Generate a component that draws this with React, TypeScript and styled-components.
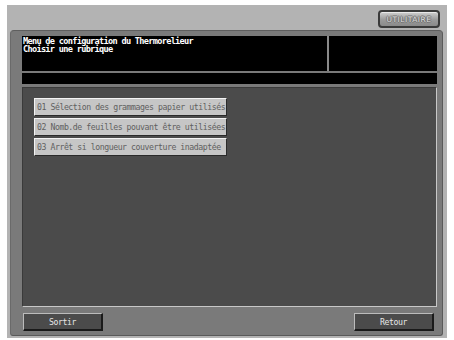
import React from "react";
import styled, { createGlobalStyle } from "styled-components";

const Global = createGlobalStyle`
  html, body { margin: 0; padding: 0; background: #ffffff; }
  body { font-family: "DejaVu Sans Mono", monospace; }
`;

const Screen = styled.div`
  margin: 5px 0 0 7px;
  width: 440px;
  height: 333px;
  background: #b3b3b3;
  display: flex;
  flex-direction: column;
`;

const TopBar = styled.div`
  height: 25px;
  display: flex;
  justify-content: flex-end;
  align-items: flex-start;
  padding: 5px 7px 0 0;
  box-sizing: border-box;
`;

const UtilButton = styled.div`
  width: 62px;
  height: 18px;
  box-sizing: border-box;
  border: 2px solid #3a3a3a;
  border-radius: 4px;
  background: linear-gradient(#d0d0d0, #9a9a9a 55%, #8a8a8a);
  box-shadow: inset 0 1px 0 #e8e8e8;
  display: flex;
  align-items: center;
  justify-content: center;
  font-family: "DejaVu Sans", sans-serif;
  font-size: 7.5px;
  letter-spacing: 0.5px;
  color: #dcdcdc;
  text-shadow: -1px 0 #707070, 1px 0 #707070, 0 -1px #707070, 0 1px #707070;
`;

const Panel = styled.div`
  margin: 0 4px 2px 3px;
  flex: 1;
  background: #7a7a7a;
  border-radius: 4px 4px 3px 3px;
  border-top: 1px solid #5e5e5e;
  border-left: 1px solid #6a6a6a;
  border-right: 1px solid #5a5a5a;
  border-bottom: 1px solid #5a5a5a;
  box-sizing: border-box;
  padding: 5px 5px 4px 11px;
  display: flex;
  flex-direction: column;
`;

const Header = styled.div`
  display: grid;
  grid-template-columns: 305px 1fr;
  gap: 2px;
  height: 35px;
  background: #8a8a8a;
`;

const Black = styled.div`
  background: #000;
  color: #fff;
  font-family: "DejaVu Sans Mono", monospace;
  font-weight: bold;
  font-size: 8.6px;
  letter-spacing: -0.7px;
  line-height: 8px;
  padding: 1px 0 0 1px;
  white-space: pre;
`;

const MessageBar = styled.div`
  margin-top: 2px;
  height: 11px;
  background: #000;
`;

const Content = styled.div`
  margin-top: 3px;
  height: 220px;
  box-sizing: border-box;
  background: #4b4b4b;
  border-top: 1px solid #3a3a3a;
  border-left: 1px solid #3a3a3a;
  border-right: 1px solid #c8c8c8;
  border-bottom: 1px solid #c8c8c8;
  padding: 10px 0 0 11px;
  display: flex;
  flex-direction: column;
  gap: 2px;
`;

const Item = styled.div`
  width: 193px;
  height: 18px;
  box-sizing: border-box;
  background: #c6c6c6;
  border-top: 1px solid #f4f4f4;
  border-left: 1px solid #f4f4f4;
  border-right: 1px solid #2a2a2a;
  border-bottom: 1px solid #2a2a2a;
  font-family: "DejaVu Sans Mono", monospace;
  font-size: 8.2px;
  letter-spacing: -0.45px;
  color: #606060;
  display: flex;
  align-items: center;
  padding-left: 2px;
  white-space: pre;
  overflow: hidden;
`;

const Footer = styled.div`
  margin-top: 6px;
  display: flex;
  justify-content: space-between;
  padding: 0 3px 0 1px;
`;

const FootButton = styled.div`
  width: 80px;
  height: 18px;
  box-sizing: border-box;
  background: #4b4b4b;
  border-top: 1px solid #bcbcbc;
  border-left: 1px solid #bcbcbc;
  border-right: 2px solid #1a1a1a;
  border-bottom: 2px solid #1a1a1a;
  color: #e6e6e6;
  font-family: "DejaVu Sans Mono", monospace;
  font-size: 8.2px;
  letter-spacing: -0.4px;
  display: flex;
  align-items: center;
  justify-content: center;
`;

const items = [
  "01 Sélection des grammages papier utilisés",
  "02 Nomb.de feuilles pouvant être utilisées",
  "03 Arrêt si longueur couverture inadaptée",
];

export default function App() {
  return (
    <>
      <Global />
      <Screen>
        <TopBar>
          <UtilButton>UTILITAIRE</UtilButton>
        </TopBar>
        <Panel>
          <Header>
            <Black>{"Menu de configuration du Thermorelieur\nChoisir une rubrique"}</Black>
            <Black />
          </Header>
          <MessageBar />
          <Content>
            {items.map((t) => (
              <Item key={t}>{t}</Item>
            ))}
          </Content>
          <Footer>
            <FootButton>Sortir</FootButton>
            <FootButton>Retour</FootButton>
          </Footer>
        </Panel>
      </Screen>
    </>
  );
}
